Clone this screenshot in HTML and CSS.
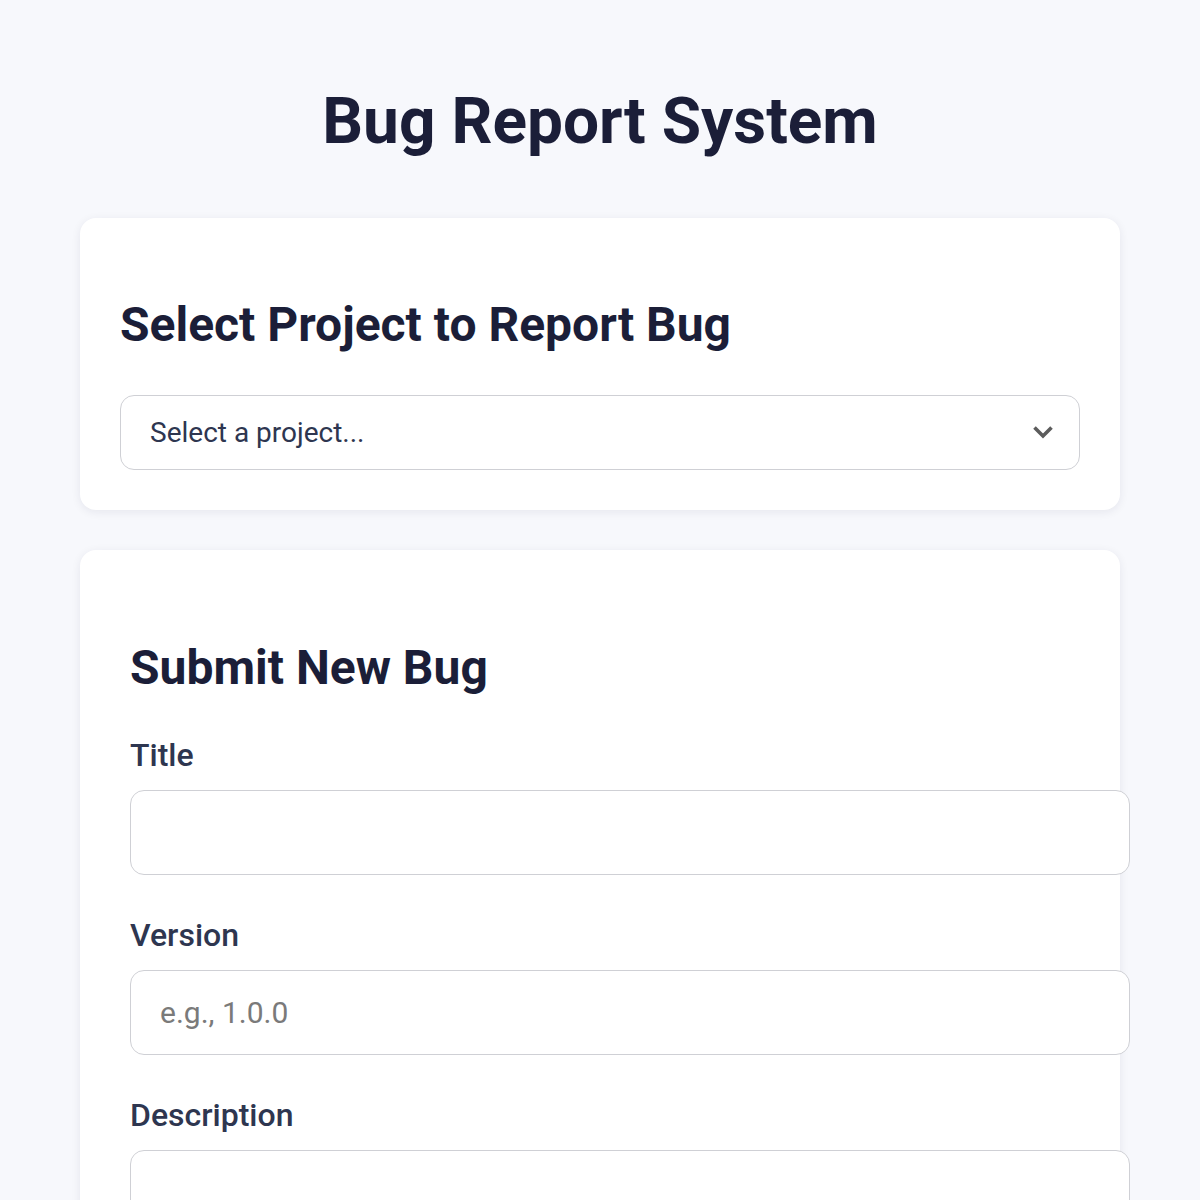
FILE: index.html
```html
<!DOCTYPE html>
<html lang="en">
<head>
<meta charset="utf-8">
<title>Bug Report System</title>
<link rel="stylesheet" href="styles.css">
</head>
<body>
<div class="page">
  <h1 class="page-title">Bug Report System</h1>
  <section class="card card-select">
    <h2 class="card-title">Select Project to Report Bug</h2>
    <div class="select-wrap">
      <select class="select">
        <option>Select a project...</option>
      </select>
      <svg class="chevron" viewBox="0 0 22 14" width="22" height="14" aria-hidden="true"><path d="M2.5 2.5 L11 11 L19.5 2.5" fill="none" stroke="#5c5c5c" stroke-width="3.6" stroke-linecap="butt" stroke-linejoin="miter"/></svg>
    </div>
  </section>
  <section class="card card-form">
    <form class="bug-form">
      <h2 class="card-title form-title">Submit New Bug</h2>
      <div class="field">
        <label class="label">Title</label>
        <input class="input" type="text">
      </div>
      <div class="field">
        <label class="label">Version</label>
        <input class="input" type="text" placeholder="e.g., 1.0.0">
      </div>
      <div class="field">
        <label class="label">Description</label>
        <textarea class="input textarea"></textarea>
      </div>
    </form>
  </section>
</div>
</body>
</html>
```
FILE: styles.css
```css
* { box-sizing: border-box; }
html, body { margin: 0; padding: 0; }
body {
  background: #f7f8fc;
  font-family: Roboto, "Liberation Sans", Arial, sans-serif;
  color: #1b1e38;
}
.page {
  width: 1040px;
  margin: 0 auto;
  padding-top: 84px;
}
.page-title {
  margin: 0 0 59px;
  font-size: 64px;
  line-height: 75px;
  font-weight: 700;
  text-align: center;
  color: #1b1e38;
}
.card {
  background: #fff;
  border-radius: 16px;
  box-shadow: 0 2px 10px rgba(20, 25, 60, 0.08);
  margin-bottom: 40px;
}
.card-select { padding: 40px; }
.card-title {
  margin: 39px 0 42px;
  font-size: 48px;
  line-height: 56px;
  font-weight: 700;
  color: #1b1e38;
}
.select-wrap { position: relative; }
.select {
  display: block;
  width: 100%;
  height: 75px;
  padding: 0 60px 0 29px;
  border: 1.5px solid #cfd0d5;
  border-radius: 14px;
  background: #fff;
  font-family: inherit;
  font-size: 28px;
  color: #2e3650;
  appearance: none;
  -webkit-appearance: none;
}
.chevron {
  position: absolute;
  right: 26px;
  top: 30px;
}
.card-form { padding: 40px; }
.bug-form { padding: 10px 10px 10px; }
.form-title { margin: 40px 0 41px; }
.field { margin-bottom: 42px; }
.label {
  display: block;
  font-size: 32px;
  line-height: 37px;
  font-weight: 500;
  color: #2e3650;
  margin-bottom: 16px;
}
.input {
  display: block;
  box-sizing: content-box;
  width: 100%;
  height: 83px;
  padding: 0 29px;
  border: 1.5px solid #cfd0d5;
  border-radius: 14px;
  background: #fff;
  font-family: inherit;
  font-size: 30px;
  color: #2e3650;
  outline: none;
}
.input::placeholder { color: #7a7a7a; }
.textarea { height: 160px; padding-top: 20px; padding-bottom: 20px; resize: none; }
```
